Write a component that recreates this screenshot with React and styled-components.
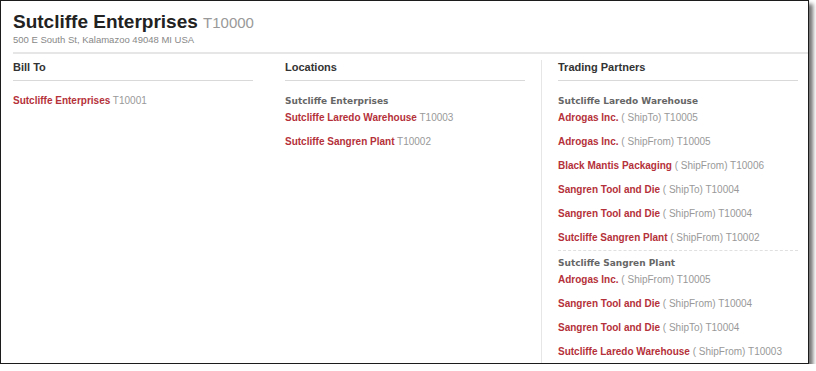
import React from "react";
import styled, { createGlobalStyle } from "styled-components";

const Global = createGlobalStyle`
  html, body { margin: 0; padding: 0; background: #fff; }
  body { font-family: "Liberation Sans", Arial, sans-serif; }
`;

const Frame = styled.div`
  box-sizing: border-box;
  width: 809px;
  height: 364px;
  border: 1px solid #1c1c1c;
  background: #fff;
  box-shadow: 4px 4px 4px rgba(0, 0, 0, 0.55);
  overflow: hidden;
`;

const Header = styled.div`
  margin-left: 12px;
  padding-top: 10px;
  padding-bottom: 7px;
  border-bottom: 2px solid #e6e6e6;
`;

const Title = styled.h1`
  margin: 0;
  font-size: 19px;
  line-height: 22px;
  font-weight: bold;
  color: #222;
`;

const Code = styled.span`
  font-size: 15px;
  font-weight: normal;
  color: #999;
`;

const Address = styled.div`
  font-size: 9.5px;
  line-height: 11px;
  color: #888;
`;

const Columns = styled.div`
  display: flex;
  padding-left: 12px;
  height: 100%;
`;

const Column = styled.div`
  flex: 0 0 auto;
  box-sizing: content-box;
  width: 240px;
  padding-left: ${(p) => (p.$first ? "0" : "16px")};
  padding-right: 16px;
  padding-top: ${(p) => (p.$divider ? "0" : "6px")};
  margin-top: ${(p) => (p.$divider ? "6px" : "0")};
  border-left: ${(p) => (p.$divider ? "1px solid #e6e6e6" : "none")};
`;

const ColumnTitle = styled.h2`
  margin: 0;
  padding-bottom: 6px;
  border-bottom: 1px solid #d9d9d9;
  font-size: 11px;
  line-height: 14px;
  font-weight: bold;
  color: #333;
`;

const Body = styled.div`
  padding-top: 14px;
`;

const GroupTitle = styled.div`
  font-family: "DejaVu Sans", Verdana, sans-serif;
  font-size: 9px;
  line-height: 12px;
  font-weight: bold;
  color: #666;
  margin-bottom: 5px;
`;

const Item = styled.div`
  font-size: 10px;
  line-height: 12px;
  color: #999;
  margin-bottom: 12px;
  white-space: nowrap;
`;

const Name = styled.a`
  color: #b5313a;
  font-weight: bold;
  text-decoration: none;
`;

const Separator = styled.div`
  border-top: 1px dashed #e0e0e0;
  margin: -6px 0 6px;
`;

const data = {
  billTo: [{ name: "Sutcliffe Enterprises", id: "T10001" }],
  locations: {
    group: "Sutcliffe Enterprises",
    items: [
      { name: "Sutcliffe Laredo Warehouse", id: "T10003" },
      { name: "Sutcliffe Sangren Plant", id: "T10002" },
    ],
  },
  partners: [
    {
      group: "Sutcliffe Laredo Warehouse",
      items: [
        { name: "Adrogas Inc.", role: "ShipTo", id: "T10005" },
        { name: "Adrogas Inc.", role: "ShipFrom", id: "T10005" },
        { name: "Black Mantis Packaging", role: "ShipFrom", id: "T10006" },
        { name: "Sangren Tool and Die", role: "ShipTo", id: "T10004" },
        { name: "Sangren Tool and Die", role: "ShipFrom", id: "T10004" },
        { name: "Sutcliffe Sangren Plant", role: "ShipFrom", id: "T10002" },
      ],
    },
    {
      group: "Sutcliffe Sangren Plant",
      items: [
        { name: "Adrogas Inc.", role: "ShipFrom", id: "T10005" },
        { name: "Sangren Tool and Die", role: "ShipFrom", id: "T10004" },
        { name: "Sangren Tool and Die", role: "ShipTo", id: "T10004" },
        { name: "Sutcliffe Laredo Warehouse", role: "ShipFrom", id: "T10003" },
      ],
    },
  ],
};

function Entry({ name, role, id }) {
  return (
    <Item>
      <Name href="#">{name}</Name>
      {role ? ` ( ${role}) ${id}` : ` ${id}`}
    </Item>
  );
}

export default function App() {
  return (
    <>
      <Global />
      <Frame>
        <Header>
          <Title>
            Sutcliffe Enterprises <Code>T10000</Code>
          </Title>
          <Address>500 E South St, Kalamazoo 49048 MI USA</Address>
        </Header>
        <Columns>
          <Column $first>
            <ColumnTitle>Bill To</ColumnTitle>
            <Body>
              {data.billTo.map((e, i) => (
                <Entry key={i} {...e} />
              ))}
            </Body>
          </Column>
          <Column>
            <ColumnTitle>Locations</ColumnTitle>
            <Body>
              <GroupTitle>{data.locations.group}</GroupTitle>
              {data.locations.items.map((e, i) => (
                <Entry key={i} {...e} />
              ))}
            </Body>
          </Column>
          <Column $divider>
            <ColumnTitle>Trading Partners</ColumnTitle>
            <Body>
              {data.partners.map((g, gi) => (
                <React.Fragment key={gi}>
                  {gi > 0 && <Separator />}
                  <GroupTitle>{g.group}</GroupTitle>
                  {g.items.map((e, i) => (
                    <Entry key={i} {...e} />
                  ))}
                </React.Fragment>
              ))}
            </Body>
          </Column>
        </Columns>
      </Frame>
    </>
  );
}
